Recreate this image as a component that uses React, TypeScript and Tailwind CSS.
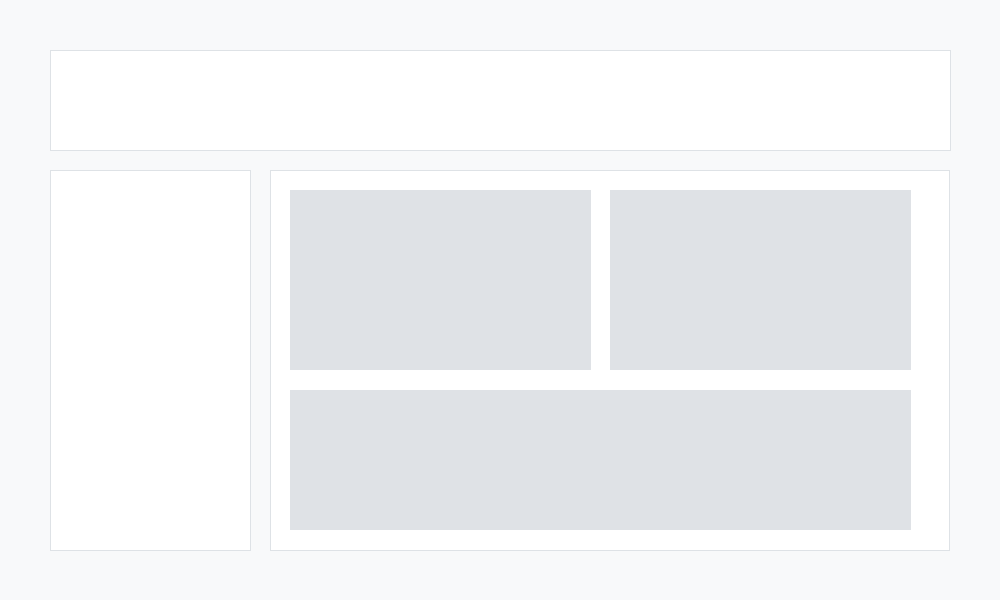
export default function App() {
  return (
    <div className="min-h-screen w-full bg-[#f8f9fa] p-[50px]">
      <div className="flex flex-col gap-[19px]">
        <div className="h-[101px] w-[901px] border border-[#dee2e6] bg-white" />
        <div className="flex gap-[19px]">
          <div className="h-[381px] w-[201px] border border-[#dee2e6] bg-white" />
          <div className="h-[381px] w-[681px] border border-[#dee2e6] bg-white pl-[19px] pt-[19px]">
            <div className="grid grid-cols-[301px_301px] grid-rows-[180px_140px] gap-x-[19px] gap-y-5">
              <div className="bg-[#dfe2e6]" />
              <div className="bg-[#dfe2e6]" />
              <div className="col-span-2 bg-[#dfe2e6]" />
            </div>
          </div>
        </div>
      </div>
    </div>
  );
}
